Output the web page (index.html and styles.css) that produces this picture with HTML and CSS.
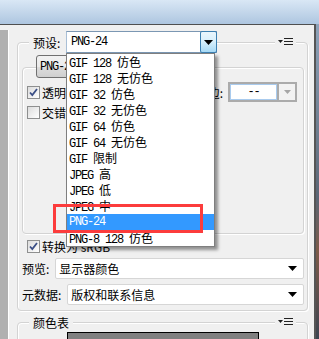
FILE: index.html
```html
<!DOCTYPE html>
<html lang="zh-CN">
<head>
  <meta charset="UTF-8" />
  <meta name="viewport" content="width=device-width, initial-scale=1.0" />
  <title>存储为 Web 所用格式</title>
  <link rel="stylesheet" href="styles.css">
</head>
<body>
  <div class="screen">
    <div class="titlebar"></div>
    <div class="frame">
      <div class="window">
        <div class="side"></div>
        <div class="panel">

          <div class="group outer">
            <div class="head">
              <span class="lbl preset-lbl">预设:</span>
              <div class="combo">
                <span class="combo-text mono">PNG-24</span>
                <span class="combo-btn">
                  <svg width="9" height="5" viewBox="0 0 9 5"><path d="M0 0h9L4.5 5z" fill="#000"/></svg>
                </span>
              </div>
              <span class="menu-icon">
                <svg width="15" height="8" viewBox="0 0 15 8"><path d="M0 2h5L2.5 5z" fill="#222"/><path d="M6 0.5h9M6 3.5h9M6 6.5h9" stroke="#222" stroke-width="1.2"/></svg>
              </span>
            </div>

            <div class="group inner">
              <div class="head inner-head">
                <button class="fmt mono">PNG-24</button>
              </div>
              <div class="row row-first">
                <label class="chk"><span class="box checked"><svg width="9" height="9" viewBox="0 0 9 9"><path d="M1 4.5l2.3 2.6L8 1" fill="none" stroke="#3b4f86" stroke-width="1.8"/></svg></span>透明度</label>
                <span class="matte-lbl">杂边:</span>
                <div class="matte">
                  <span class="matte-in mono">--</span>
                  <span class="matte-btn"><svg width="7" height="4" viewBox="0 0 7 4"><path d="M0 0h7L3.5 4z" fill="#a6a6a6"/></svg></span>
                </div>
              </div>
              <div class="row row-second">
                <label class="chk"><span class="box"></span>交错</label>
              </div>
            </div>

            <label class="chk srgb"><span class="box checked"><svg width="9" height="9" viewBox="0 0 9 9"><path d="M1 4.5l2.3 2.6L8 1" fill="none" stroke="#3b4f86" stroke-width="1.8"/></svg></span>转换为 sRGB</label>

            <div class="field">
              <span>预览:</span>
              <div class="select">显示器颜色<svg width="9" height="5" viewBox="0 0 9 5"><path d="M0 0h9L4.5 5z" fill="#000"/></svg></div>
            </div>
            <div class="field">
              <span>元数据:</span>
              <div class="select">版权和联系信息<svg width="9" height="5" viewBox="0 0 9 5"><path d="M0 0h9L4.5 5z" fill="#000"/></svg></div>
            </div>
          </div>

          <div class="group table">
            <div class="head table-head">
              <span class="lbl">颜色表</span>
              <span class="menu-icon">
                <svg width="15" height="8" viewBox="0 0 15 8"><path d="M0 2h5L2.5 5z" fill="#222"/><path d="M6 0.5h9M6 3.5h9M6 6.5h9" stroke="#222" stroke-width="1.2"/></svg>
              </span>
            </div>
            <div class="swatches"></div>
          </div>

        </div>
      </div>
      <div class="desk"></div>
    </div>

    <!-- open preset list -->
    <ul class="droplist mono">
      <li>GIF 128 <span class="zh">仿色</span></li>
      <li>GIF 128 <span class="zh">无仿色</span></li>
      <li>GIF 32 <span class="zh">仿色</span></li>
      <li>GIF 32 <span class="zh">无仿色</span></li>
      <li>GIF 64 <span class="zh">仿色</span></li>
      <li>GIF 64 <span class="zh">无仿色</span></li>
      <li>GIF <span class="zh">限制</span></li>
      <li>JPEG <span class="zh">高</span></li>
      <li>JPEG <span class="zh">低</span></li>
      <li>JPEG <span class="zh">中</span></li>
      <li class="sel">PNG-24</li>
      <li>PNG-8 128 <span class="zh">仿色</span></li>
    </ul>
    <div class="mark"></div>
  </div>
</body>
</html>
```

FILE: styles.css
```css
body {
  margin: 0;
  width: 319px;
  height: 339px;
  overflow: hidden;
  font-family: "Noto Sans CJK SC", "Liberation Sans", sans-serif;
  font-size: 12px;
  color: #000;
}
.screen {
  position: relative;
  width: 319px;
  height: 339px;
  overflow: hidden;
  display: flex;
  flex-direction: column;
}
.titlebar {
  height: 24px;
  flex: none;
  background: linear-gradient(#d9e7f5, #aec6e0);
}
.frame {
  flex: 1;
  min-height: 0;
  display: flex;
}
.window {
  flex: 1;
  display: flex;
  overflow: hidden;
  border-top: 1px solid #4f4f4f;
  border-right: 2px solid #555;
  background: #f0f0f0;
}
.desk {
  width: 3px;
  background: linear-gradient(#8ea3ba, #5b6675 55%, #7d5b49 72%, #3c4450);
}
.side {
  width: 8px;
  margin-top: 5px;
  background: #b0b0b0;
  border-right: 1px solid #fff;
}
.panel {
  flex: 1;
  padding: 6px 6px 0 8px;
}

.mono {
  font-family: "Liberation Mono", "Noto Sans CJK SC", monospace;
  font-size: 12px;
  letter-spacing: -1.2px;
}
.zh {
  font-family: "Noto Sans CJK SC", sans-serif;
  font-size: 12px;
  letter-spacing: 0;
}

.group {
  border: 1px solid #d3d3d3;
  border-radius: 4px;
  box-shadow: inset 1px 1px 0 #fff, 1px 1px 0 #fff;
}
.head {
  display: flex;
  align-items: center;
  height: 22px;
  margin-top: -12px;
  padding-left: 11px;
}
.lbl {
  background: #f0f0f0;
  padding: 0 4px;
}
.preset-lbl {
  width: 37px;
  box-sizing: border-box;
}
.menu-icon {
  display: flex;
  margin-left: auto;
  margin-right: 11px;
  padding: 0 3px;
  background: #f0f0f0;
}

.outer {
  margin-top: 11px;
  padding-bottom: 5px;
}
.combo {
  width: 151px;
  height: 22px;
  box-sizing: border-box;
  display: flex;
  border: 1px solid #7b97b3;
  border-left-color: #a9bfd6;
  background: #fff;
}
.combo-text {
  flex: 1;
  padding-left: 4px;
  line-height: 20px;
}
.combo-btn {
  width: 17px;
  box-sizing: border-box;
  display: flex;
  align-items: center;
  justify-content: center;
  border: 1px solid #3c7fb1;
  border-radius: 2px;
  margin: -1px -1px -1px 0;
  background: linear-gradient(#eaf6fd, #d9f0fc 45%, #a7d9f5);
}

.inner {
  margin: 14px 3px 0 4px;
  height: 167px;
  box-sizing: border-box;
}
.inner-head {
  height: 23px;
  margin-top: -13px;
  padding-left: 13px;
}
.fmt {
  width: 58px;
  height: 23px;
  padding: 0 0 0 3px;
  text-align: left;
  border: 1px solid #707070;
  border-radius: 3px;
  background: linear-gradient(#f2f2f2, #ebebeb 50%, #dddddd 51%, #cfcfcf);
  color: #000;
}
.row {
  display: flex;
  align-items: center;
  padding: 0 6px 0 4px;
}
.row-first {
  margin-top: 4px;
  height: 20px;
}
.row-second {
  margin-top: 2px;
  height: 16px;
}
.chk {
  display: flex;
  align-items: center;
  gap: 2px;
}
.box {
  width: 13px;
  height: 13px;
  box-sizing: border-box;
  display: flex;
  align-items: center;
  justify-content: center;
  border: 1px solid #8e8f8f;
  background: linear-gradient(135deg, #dcdcdc, #fff);
}
.matte-lbl {
  margin-left: auto;
  margin-right: 5px;
}
.matte {
  width: 69px;
  height: 20px;
  box-sizing: border-box;
  display: flex;
  border: 2px solid #ababab;
}
.matte-in {
  flex: 1;
  border: 1px solid #a9cbee;
  background: #fff;
  text-align: center;
  line-height: 14px;
}
.matte-btn {
  width: 16px;
  display: flex;
  align-items: center;
  justify-content: center;
  border-left: 2px solid #ababab;
  background: #f2f2f2;
}

.srgb {
  height: 13px;
  margin: 6px 0 0 9px;
}
.field {
  display: flex;
  align-items: center;
  gap: 6px;
  margin: 5px 3px 0 4px;
}
.select {
  flex: 1;
  height: 21px;
  box-sizing: border-box;
  display: flex;
  align-items: center;
  justify-content: space-between;
  padding: 0 6px 0 3px;
  border: 1px solid #d6d6d6;
  border-radius: 2px;
  background: #fff;
}

.table {
  margin-top: 11px;
  height: 40px;
}
.table-head {
  height: 16px;
  margin-top: -9px;
}
.swatches {
  margin: 2px 0 0 49px;
  width: 192px;
  height: 20px;
  box-sizing: border-box;
  border: 1px solid #000;
  background: #808080;
}

.droplist {
  position: absolute;
  left: 66px;
  top: 53px;
  width: 149px;
  margin: 0;
  padding: 0;
  list-style: none;
  box-sizing: border-box;
  border: 1px solid #7f7f7f;
  background: #fff;
  box-shadow: 3px 3px 3px rgba(0, 0, 0, 0.4);
}
.droplist li {
  height: 16px;
  line-height: 16px;
  padding-left: 2px;
  white-space: nowrap;
}
.droplist .sel {
  background: #3399ff;
  color: #fff;
}
.mark {
  position: absolute;
  left: 53px;
  top: 204px;
  width: 150px;
  height: 29px;
  box-sizing: border-box;
  border: 3px solid #fc3c3c;
}
```
